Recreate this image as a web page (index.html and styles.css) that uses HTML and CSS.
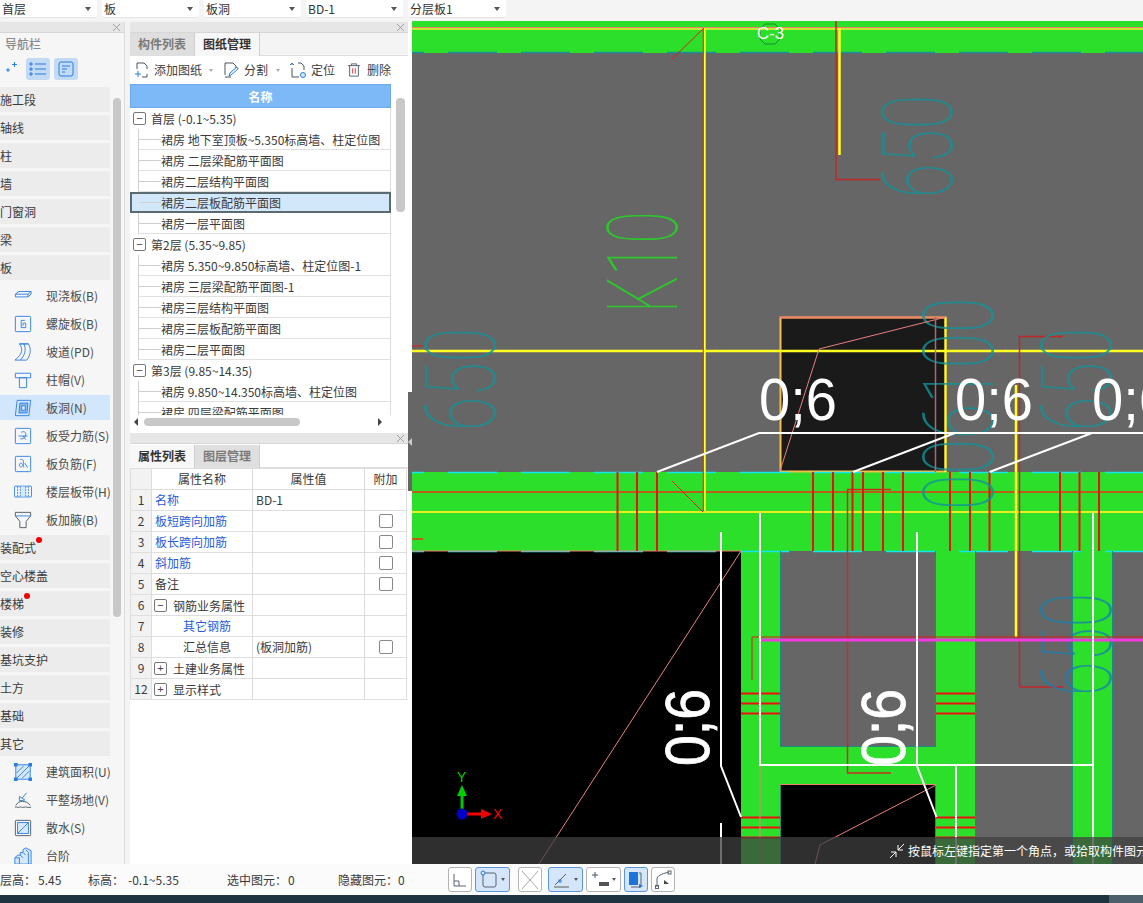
FILE: index.html
```html
<!DOCTYPE html>
<html lang="zh">
<head>
<meta charset="utf-8">
<title>板洞</title>
<link rel="stylesheet" href="styles.css">
</head>
<body>
<div class="topbar">
  <div class="combo c1"><span>首层</span><i class="caret"></i></div>
  <div class="combo c1"><span>板</span><i class="caret"></i></div>
  <div class="combo c1"><span>板洞</span><i class="caret"></i></div>
  <div class="combo c1"><span>BD-1</span><i class="caret"></i></div>
  <div class="combo c2"><span>分层板1</span><i class="caret"></i></div>
</div>
<div class="main">
  <aside class="nav">
    <div class="strip"><svg class="close" width="9" height="9" viewBox="0 0 9 9"><path d="M1 1 8 8M8 1 1 8"/></svg></div>
    <div class="nav-title">导航栏</div>
    <div class="nav-tools">
      <svg class="ico-plus" width="14" height="14" viewBox="0 0 14 14"><path d="M8 2.500h5M10.500 0v5M2 8h4M4 6v4" class="st-blue"/></svg>
      <span class="toggle"><svg width="18" height="16" viewBox="0 0 18 16"><path d="M6 3h11M6 8h11M6 13h11" class="st-blue"/><path d="M1 2h2v2H1zM1 7h2v2H1zM1 12h2v2H1z" class="st-blue"/></svg></span>
      <span class="toggle"><svg width="16" height="16" viewBox="0 0 16 16"><rect x="1" y="1" width="14" height="14" rx="2" class="st-blue"/><path d="M4 5h8M4 8h5M4 11h3" class="st-blue"/></svg></span>
    </div>
    <div class="nav-body">
      <div class="nav-list">
        <div class="cat">施工段</div>
        <div class="cat">轴线</div>
        <div class="cat">柱</div>
        <div class="cat">墙</div>
        <div class="cat">门窗洞</div>
        <div class="cat">梁</div>
        <div class="cat">板</div>
        <div class="sub"><svg viewBox="0 0 20 20"><path d="M1.500 8 5.500 5H19v3l-3.500 3H1.500z M1.500 8h14v3 M15.500 8 19 5" class="st-blue"/></svg>现浇板(B)</div>
        <div class="sub"><svg viewBox="0 0 20 20"><rect x="1.500" y="1.500" width="17" height="17" rx="1" class="st-blue"/><path d="M12 6H8v8h5V9h-3v3" class="st-blue"/></svg>螺旋板(B)</div>
        <div class="sub"><svg viewBox="0 0 20 20"><path d="M6 1c4 5 4 11-5 18h13c5-6 5-13 2-18zM6 1c5 0 7 0 10 0M11 1c3 6 1 13-4 18" class="st-blue"/></svg>坡道(PD)</div>
        <div class="sub"><svg viewBox="0 0 20 20"><path d="M1.500 2.500h17v5h-17zM6 7.500h8v11H6z" class="st-blue"/></svg>柱帽(V)</div>
        <div class="sub active"><svg viewBox="0 0 20 20"><path d="M3.500 1.500h15l-2 17h-15z" class="st-blue"/><path d="M6.500 4.500h9l-1 11h-9z" class="st-blue fill-blue"/><rect x="8.500" y="7.500" width="4" height="5" class="st-blue fill-light"/></svg>板洞(N)</div>
        <div class="sub"><svg viewBox="0 0 20 20"><rect x="1.500" y="1.500" width="17" height="17" rx="1" class="st-blue"/><path d="M5 10h10M8 6c3-2 6 0 5 3-1 3-3 5-6 4M10 10l3 4" class="st-blue"/></svg>板受力筋(S)</div>
        <div class="sub"><svg viewBox="0 0 20 20"><rect x="1.500" y="1.500" width="17" height="17" rx="1" class="st-blue"/><path d="M7 5c4-1 4 3 3 6s-4 3-4 0 4-3 5 3M12 9l3 5" class="st-blue"/></svg>板负筋(F)</div>
        <div class="sub"><svg viewBox="0 0 20 20"><rect x="0.500" y="3.500" width="19" height="12" rx="1" class="st-blue"/><rect x="7" y="4" width="6" height="11" class="fill-light"/><path d="M4 4v11M7 4v11M13 4v11M16 4v11" class="st-dash"/></svg>楼层板带(H)</div>
        <div class="sub"><svg viewBox="0 0 20 20"><path d="M1.500 1.500h17v4l-5 6v7h-7v-7l-5-6z" class="st-dark"/><path d="M1.500 5.500h17" class="st-blue"/></svg>板加腋(B)</div>
        <div class="cat">装配式<i class="dot"></i></div>
        <div class="cat">空心楼盖</div>
        <div class="cat">楼梯<i class="dot"></i></div>
        <div class="cat">装修</div>
        <div class="cat">基坑支护</div>
        <div class="cat">土方</div>
        <div class="cat">基础</div>
        <div class="cat">其它</div>
        <div class="sub"><svg viewBox="0 0 20 20"><rect x="2" y="2" width="16" height="16" class="fill-light st-blue"/><path d="M3 11 11 3M3 17 17 3M9 17l8-8" class="st-blue"/><path d="M0 0h4v4H0zM16 0h4v4h-4zM0 16h4v4H0zM16 16h4v4h-4z" class="handle"/></svg>建筑面积(U)</div>
        <div class="sub"><svg viewBox="0 0 20 20"><path d="M14 2 9 8M6 6l6 4-6 1z" class="st-blue"/><path d="M2 16c3-6 12-6 16 0" class="st-dark"/><path d="M1 18c2-1 3 1 5 0s3 1 5 0 4 1 8 0" class="st-dark"/></svg>平整场地(V)</div>
        <div class="sub"><svg viewBox="0 0 20 20"><rect x="1.500" y="1.500" width="17" height="17" rx="1" class="st-dark"/><rect x="4" y="4" width="12" height="12" class="fill-light st-blue"/><path d="M4 16 16 4" class="st-blue"/></svg>散水(S)</div>
        <div class="sub"><svg viewBox="0 0 20 20"><path d="M1 12l3-3h3V6h3V3l3-2 6 3v15H1z" class="st-blue fill-light"/><path d="M1 12h5v7M7 9l3 3M10 6l3 3M13 3l3 3v13" class="st-blue"/></svg>台阶</div>
      </div>
      <div class="nav-scroll"></div>
    </div>
  </aside>

  <section class="mid">
    <div class="drawings">
      <div class="strip"><svg class="close" width="9" height="9" viewBox="0 0 9 9"><path d="M1 1 8 8M8 1 1 8"/></svg></div>
      <div class="tabs">
        <div class="tab off">构件列表</div>
        <div class="tab on">图纸管理</div>
      </div>
      <div class="tools">
        <svg class="t-ico" viewBox="0 0 16 16"><path d="M3 7V1h7l3 3v3M13 12v3H8" class="st-dark"/><path d="M1 12h6M4 9v6" class="st-blue"/></svg>
        <span>添加图纸</span><i class="mini-caret mc1"></i>
        <svg class="t-ico ic2" viewBox="0 0 16 16"><path d="M2 13V1h8l3 3v2M2 15h6" class="st-dark"/><path d="M6 14l1-3 7-6 1 2-7 6z" class="st-blue"/></svg>
        <span>分割</span><i class="mini-caret mc2"></i>
        <svg class="t-ico ic3" viewBox="0 0 16 16"><path d="M2 6v9h7M8 1h3l3 3v4M2 1v2" class="st-dark"/><path d="M4 3 2 1 0 3" class="st-blue"/><circle cx="13" cy="13" r="2.500" class="st-blue fill-light"/></svg>
        <span>定位</span>
        <svg class="t-ico ic4" viewBox="0 0 16 16"><path d="M1 3h14M5 3V1h6v2M3 3v12h10V3" class="st-dark"/><path d="M6.500 6v6M9.500 6v6" class="st-red"/></svg>
        <span>删除</span>
      </div>
      <div class="tree-area">
        <div class="tree-col">
          <div class="tree-head">名称</div>
          <div class="tree-clip">
            <div class="group"><i class="box">−</i>首层 (-0.1~5.35)</div>
            <div class="item"><i class="twig"></i>裙房 地下室顶板~5.350标高墙、柱定位图</div>
            <div class="item"><i class="twig"></i>裙房 二层梁配筋平面图</div>
            <div class="item"><i class="twig"></i>裙房二层结构平面图</div>
            <div class="item selected"><i class="twig"></i>裙房二层板配筋平面图</div>
            <div class="item"><i class="twig"></i>裙房一层平面图</div>
            <div class="group"><i class="box">−</i>第2层 (5.35~9.85)</div>
            <div class="item"><i class="twig"></i>裙房 5.350~9.850标高墙、柱定位图-1</div>
            <div class="item"><i class="twig"></i>裙房 三层梁配筋平面图-1</div>
            <div class="item"><i class="twig"></i>裙房三层结构平面图</div>
            <div class="item"><i class="twig"></i>裙房三层板配筋平面图</div>
            <div class="item"><i class="twig"></i>裙房二层平面图</div>
            <div class="group"><i class="box">−</i>第3层 (9.85~14.35)</div>
            <div class="item"><i class="twig"></i>裙房 9.850~14.350标高墙、柱定位图</div>
            <div class="item"><i class="twig"></i>裙房 四层梁配筋平面图</div>
          </div>
        </div>
        <div class="tree-vbar"><div class="vthumb"></div></div>
      </div>
      <div class="hbar"><i class="arr-l"></i><div class="hthumb"></div><i class="arr-r"></i></div>
    </div>
    <div class="props">
      <div class="strip"><svg class="close" width="9" height="9" viewBox="0 0 9 9"><path d="M1 1 8 8M8 1 1 8"/></svg></div>
      <div class="tabs">
        <div class="tab on">属性列表</div>
        <div class="tab off">图层管理</div>
      </div>
      <table class="ptable">
        <tr><th class="n"></th><th class="pn">属性名称</th><th class="pv">属性值</th><th class="pa">附加</th></tr>
        <tr><td class="n">1</td><td class="link">名称</td><td>BD-1</td><td></td></tr>
        <tr><td class="n">2</td><td class="link">板短跨向加筋</td><td></td><td class="ck"><i class="check"></i></td></tr>
        <tr><td class="n">3</td><td class="link">板长跨向加筋</td><td></td><td class="ck"><i class="check"></i></td></tr>
        <tr><td class="n">4</td><td class="link">斜加筋</td><td></td><td class="ck"><i class="check"></i></td></tr>
        <tr><td class="n">5</td><td>备注</td><td></td><td class="ck"><i class="check"></i></td></tr>
        <tr><td class="n">6</td><td class="node"><div class="node-in"><i class="box pbox">−</i>钢筋业务属性</div></td><td></td><td></td></tr>
        <tr><td class="n">7</td><td class="link indent">其它钢筋</td><td></td><td></td></tr>
        <tr><td class="n">8</td><td class="indent">汇总信息</td><td>(板洞加筋)</td><td class="ck"><i class="check"></i></td></tr>
        <tr><td class="n">9</td><td class="node"><div class="node-in"><i class="box pbox">+</i>土建业务属性</div></td><td></td><td></td></tr>
        <tr><td class="n">12</td><td class="node"><div class="node-in"><i class="box pbox">+</i>显示样式</div></td><td></td><td></td></tr>
      </table>
    </div>
  </section>

  <div class="splitter"><div class="handle-bar"><i class="arr-l light"></i></div></div>

  <div class="canvas">
    <svg class="cad-svg" viewBox="412 21 731 843" width="731" height="843">
      <rect x="412" y="21" width="731" height="843" fill="#666666"/>
      <rect x="412" y="21" width="731" height="32" fill="#2bdf2b"/>
      <rect x="412" y="472" width="731" height="79" fill="#2bdf2b"/>
      <rect x="412" y="551" width="329" height="313" fill="#000"/>
      <rect x="741" y="551" width="39" height="313" fill="#2bdf2b"/>
      <rect x="936" y="551" width="39" height="313" fill="#2bdf2b"/>
      <rect x="1073" y="551" width="39" height="313" fill="#2bdf2b"/>
      <rect x="780" y="746" width="156" height="38" fill="#2bdf2b"/>
      <rect x="780" y="785" width="156" height="79" fill="#000"/>
      <rect x="780.500" y="317.500" width="165" height="154" fill="#1a1a1a" stroke="#f5c04a" stroke-width="2"/>
      <path d="M780 317.500H946" stroke="#f0806a" stroke-width="2"/>
      <path d="M945.500 317V472" stroke="#ffff20" stroke-width="2"/>

      <path d="M412 52.500H1143" class="dash-teal"/>
      <path d="M412 472.500H1143M412 551.500H1143" class="dash-cyan"/>
      <path d="M412 551H741M780 784.500H936" class="ln-salmon"/>
      <path d="M780.500 551V746M935.500 551V746M780.500 785V864M935.500 785V864M975.500 551V864M1072.500 551V864M1112.500 551V864M780 746.500H936" class="ln-teal"/>

      <path d="M412 27.500H1143" class="ln-salmon"/>
      <path d="M412 29H1143" class="ln-yellow-thin"/>
      <path d="M412 492H1143" class="ln-brown"/>
      <path d="M412 512H1143" class="ln-yellow-thin2"/>
      <path d="M412 351H1143" class="ln-yellow"/>
      <path d="M704.500 28V511M839.500 28V155M1016 385V637" class="ln-yellow"/>
      <path d="M703.300 28V511" class="ln-red"/>
      <path d="M672 59 704 28M672 481 703 512" class="ln-red"/>
      <path d="M836 21V179.500H880" class="ln-dred2"/>
      <path d="M1019.500 687H1063M1063 336.500H1019.500V687" class="ln-dred2"/>
      <path d="M891 489.500H847.500V773H891" class="ln-dred"/>
      <path d="M412 346H423" class="ln-red"/>
      <path d="M412 539H423" class="ln-brown"/>

      <path d="M617.500 472v79M637 472v79M657 472v79M813 472v79M833 472v79M852.500 472v79M863 472v79M883 472v79M903 472v79M950 472v79M970 472v79M989.500 472v79M1060 472v79M1079.500 472v79M1099 472v79" class="ln-rebar"/>
      <path d="M741 693.500h39M741 703.500h39M741 713.500h39M936 693.500h39M936 703.500h39M936 713.500h39M741 817.500h39M741 827.500h39M741 837.500h39M936 817.500h39M936 827.500h39M936 837.500h39" class="ln-rebar"/>

      <text class="cad teal" transform="translate(952,198) rotate(-90) scale(0.64,1)">650</text>
      <text class="cad teal" transform="translate(495,431) rotate(-90) scale(0.64,1)">650</text>
      <text class="cad teal" transform="translate(1111,431) rotate(-90) scale(0.64,1)">650</text>
      <text class="cad tealb" transform="translate(1111,696) rotate(-90) scale(0.64,1)">650</text>
      <text class="cad teal" transform="translate(993,510) rotate(-90) scale(0.66,1)">006100</text>
      <text class="cad lime" transform="translate(677,313) rotate(-90) scale(0.6,1)">K10</text>

      <path d="M760 640H1143" class="ln-magenta"/>
      <path d="M1143 637H752V680" class="ln-red"/>

      <path d="M946 317 819 349 780 471" class="ln-pink"/>
      <path d="M935.500 317V472" class="ln-brownpink"/>
      <path d="M741 551 539 864" class="ln-pink"/>
      <path d="M936 785 820 845 815 864" class="ln-pink"/>
      <path d="M760 765V864" class="ln-pink"/>

      <path d="M657 472 759 433H1143M853 472 955 433M989.500 472 1092 433" class="ln-white"/>
      <path d="M760 513V765H1093V513M1093 765V864M956 765V864" class="ln-white"/>
      <path d="M721 532V766L741 817M721 823V864M917 532V766L936.500 817" class="ln-white"/>

      <text class="big" x="759" y="420" textLength="78" lengthAdjust="spacingAndGlyphs">0;6</text>
      <text class="big" x="955" y="420" textLength="78" lengthAdjust="spacingAndGlyphs">0;6</text>
      <text class="big" x="1092" y="420" textLength="78" lengthAdjust="spacingAndGlyphs">0;6</text>
      <text class="big heavy" transform="translate(709,766) rotate(-90)" textLength="77" lengthAdjust="spacingAndGlyphs">0;6</text>
      <text class="big heavy" transform="translate(905,766) rotate(-90)" textLength="77" lengthAdjust="spacingAndGlyphs">0;6</text>

      <path d="M765 24h10l5 5v10l-5 5h-10l-5-5V29z" class="ln-dgreen"/>
      <text class="c3" x="757" y="39" textLength="27" lengthAdjust="spacingAndGlyphs">C-3</text>

      <path d="M462 812V796" class="ax-g"/><path d="M462 785l5 11h-10z" class="ax-gf"/>
      <text class="ax-y" x="457" y="782">Y</text>
      <path d="M466 814H481" class="ax-r"/><path d="M492 814l-11-5v10z" class="ax-rf"/>
      <text class="ax-x" x="493" y="819">X</text>
      <circle cx="462" cy="814" r="5.500" fill="#0000c8"/>
    </svg>
    <div class="prompt">
      <svg width="18" height="18" viewBox="0 0 18 18"><path d="M10 8 16 2M10 3v5h5M8 10l-6 6M3 10h5v5" class="st-white"/></svg>
      <span>按鼠标左键指定第一个角点，或拾取构件图元</span>
    </div>
  </div>
</div>

<div class="status">
  <span class="s-a">层高：</span><span class="s-b">5.45</span>
  <span class="s-c">标高：</span><span class="s-d">-0.1~5.35</span>
  <span class="s-e">选中图元：</span><span class="s-f">0</span>
  <span class="s-g">隐藏图元：</span><span class="s-h">0</span>
  <div class="btns">
    <div class="btn sq"><svg width="16" height="20" viewBox="0 0 16 20"><path d="M2 4v12h12M2 11h5v5" class="st-grey"/></svg></div>
    <div class="btn wide on"><svg width="18" height="20" viewBox="0 0 18 20"><rect x="3" y="3" width="13" height="14" rx="2" class="st-grey"/><circle cx="3" cy="3" r="2" class="st-blue fill-light"/></svg><i class="mini-caret dark"></i></div>
    <div class="btn sq gap"><svg width="18" height="20" viewBox="0 0 18 20"><path d="M1 1 17 19M17 1 1 19" class="st-lgrey"/></svg></div>
    <div class="btn wide on"><svg width="18" height="20" viewBox="0 0 18 20"><path d="M2 15 13 4" class="st-grey"/><path d="M1 17h15" class="thick-grey"/><rect x="6" y="10" width="2" height="2" class="st-blue"/></svg><i class="mini-caret dark"></i></div>
    <div class="btn wide"><svg width="18" height="20" viewBox="0 0 18 20"><path d="M1 5h6M4 2v6" class="st-dark"/><rect x="8" y="12" width="10" height="4" fill="#555"/></svg><i class="mini-caret dark"></i></div>
    <div class="btn sq on"><svg width="16" height="20" viewBox="0 0 16 20"><rect x="1" y="2" width="9" height="13" fill="#1e73d8"/><path d="M11 3h2v12M3 17h10" class="st-grey"/><path d="M11 14l4 2-4 2z" fill="#1e73d8"/></svg></div>
    <div class="btn sq"><svg width="18" height="20" viewBox="0 0 18 20"><path d="M3 17V9c0-3 4-5 12-7" class="st-grey"/><path d="M10 10l5 4h-5z" fill="#444"/><rect x="1.500" y="15.500" width="3" height="3" class="st-grey"/><rect x="14" y="1" width="3" height="3" class="st-grey"/></svg></div>
  </div>
</div>
<div class="footer"><div class="foot-right"></div></div>
</body>
</html>
```
FILE: styles.css
```css
* { box-sizing: border-box; }
html, body { margin: 0; padding: 0; }
body {
  width: 1143px; height: 903px; overflow: hidden;
  display: flex; flex-direction: column;
  background: #f3f3f3; color: #333;
  font: 12px/1 "Noto Sans CJK SC", "Noto Sans", sans-serif;
}
i { display: block; font-style: normal; }

/* top */
.topbar { height: 21px; flex: none; display: flex; gap: 5px; background: #f4f4f4; }
.combo {
  height: 18px; background: #fff; border-radius: 0 0 3px 3px;
  display: flex; align-items: center; justify-content: space-between;
  padding: 0 6px 0 2px; font-size: 12px; color: #333;
  border-bottom: 1px solid #e4e4e4;
}
.c1 { width: 97px; }
.c2 { width: 98px; padding-left: 2px; }
.caret { width: 0; height: 0; border: 3px solid transparent; border-top: 4px solid #555; border-bottom: 0; }

.main { height: 843px; flex: none; display: flex; }

/* shared */
.strip { height: 11px; background: #e6e6e6; border-bottom: 1px solid #d6d6d6; display: flex; justify-content: flex-end; align-items: center; padding-right: 3px; flex: none; }
.close { fill: none; stroke: #a0a0a0; stroke-width: 1; }
.st-blue { fill: none; stroke: #2a7de1; stroke-width: 1; }
.st-blue.fill-blue { fill: #8dbcf0; }
.st-blue.fill-light { fill: #d6e8fb; }
.fill-light { fill: #d6e8fb; }
.st-dark { fill: none; stroke: #4a5260; stroke-width: 1; }
.st-red { fill: none; stroke: #e02020; stroke-width: 1; }
.st-dash { fill: none; stroke: #2a7de1; stroke-width: 1; stroke-dasharray: 2 1; }
.st-white { fill: none; stroke: #fff; stroke-width: 1; }
.st-grey { fill: none; stroke: #5a6270; stroke-width: 1; }
.st-lgrey { fill: none; stroke: #a8a8a8; stroke-width: 1; }
.thick-grey { fill: none; stroke: #9aa0a8; stroke-width: 2; }
.handle { fill: #2a7de1; }

/* nav */
.nav { width: 125px; flex: none; background: #f6f6f6; border-right: 1px solid #dcdcdc; display: flex; flex-direction: column; overflow: hidden; margin-top: 1px; }
.nav-title { height: 22px; padding: 4px 0 0 5px; color: #8a8a8a; font-size: 12px; font-weight: 500; flex: none; line-height: 14px; }
.nav-tools { height: 32px; flex: none; display: flex; align-items: center; padding: 0 0 4px 4px; gap: 4px; }
.ico-plus { margin-right: 4px; }
.toggle { width: 24px; height: 22px; background: #c2daf4; border-radius: 3px; display: flex; align-items: center; justify-content: center; }
.nav-body { flex: 1; display: flex; min-height: 0; }
.nav-list { width: 110px; flex: none; display: flex; flex-direction: column; gap: 3px; }
.cat { height: 25px; flex: none; background: #ececec; padding-left: 0; line-height: 25px; color: #3a3a3a; display: flex; }
.sub { height: 25px; flex: none; display: flex; align-items: center; padding-left: 14px; color: #4a4a4a; white-space: nowrap; }
.sub svg { width: 18px; height: 18px; margin-right: 14px; flex: none; }
.sub.active { background: #d3e7fc; }
.dot { width: 6px; height: 6px; border-radius: 50%; background: #f00000; margin-top: 2px; margin-left: 0; }
.nav-scroll { width: 8px; height: 519px; margin: 11px 0 0 3px; background: #c8c8c8; border-radius: 4px; flex: none; }

/* middle */
.mid { width: 278px; flex: none; margin-left: 5px; display: flex; flex-direction: column; margin-top: 1px; }
.drawings { height: 411px; flex: none; background: #fff; display: flex; flex-direction: column; padding-bottom: 4px; }
.tabs { height: 23px; flex: none; display: flex; background: #f4f4f4; border-bottom: 1px solid #ddd; }
.tab { width: 65px; height: 23px; line-height: 22px; text-align: center; font-weight: 700; font-size: 12px; border-right: 1px solid #cfcfcf; }
.tab.off { background: #dfdfdf; color: #7a7a7a; }
.tab.on { background: #f7f7f7; color: #333; }
.tools { height: 28px; flex: none; display: flex; align-items: center; padding-left: 4px; color: #3d3d3d; background: #fff; }
.t-ico { width: 16px; height: 16px; margin-right: 4px; flex: none; }
.mini-caret { width: 0; height: 0; border: 2.5px solid transparent; border-top: 3px solid #aaa; border-bottom: 0; flex: none; }
.mini-caret.dark { border-top-color: #555; }
.mc1 { margin: 0 10px 0 7px; }
.mc2 { margin: 0 10px 0 8px; }
.ic2 { margin-right: 5px; }
.ic3 { margin-right: 5px; }
.ic4 { margin: 0 6px 0 12px; width: 14px; }
.tree-area { flex: 1; display: flex; min-height: 0; }
.tree-col { width: 261px; flex: none; display: flex; flex-direction: column; min-height: 0; }
.tree-head { height: 24px; flex: none; background: #7db8f7; color: #fff; font-weight: 700; text-align: center; line-height: 24px; border: 1px solid #6ea8e8; }
.tree-clip { flex: 1; overflow: hidden; min-height: 0; }
.group { height: 21px; display: flex; align-items: center; color: #3a3a3a; white-space: nowrap; padding-left: 3px; border-right: 1px solid #ddd; }
.box { width: 13px; height: 13px; border: 1px solid #777; border-radius: 2px; margin-right: 5px; font-size: 11px; line-height: 10px; text-align: center; color: #444; flex: none; font-family: "Liberation Sans", sans-serif; background: #fff; }
.item { height: 21px; margin-left: 8px; padding-top: 1px; border-left: 1px solid #d0d0d0; border-right: 1px solid #ddd; border-bottom: 1px solid #e0e0e0; display: flex; align-items: center; color: #3a3a3a; white-space: nowrap; overflow: hidden; }
.twig { width: 22px; height: 1px; background: #d0d0d0; flex: none; }
.item.selected { margin-left: 0; padding: 0 0 0 8px; height: 21px; background: #d3e7fb; border: 2px solid #5a6a70; }
.item.selected .twig { width: 21px; }
.tree-vbar { width: 17px; flex: none; }
.vthumb { width: 9px; height: 114px; margin: 14px 0 0 5px; background: #c8c8c8; border-radius: 4px; }
.hbar { height: 14px; flex: none; display: flex; align-items: center; padding-left: 4px; background: #fff; }
.hthumb { width: 156px; height: 8px; background: #c8c8c8; border-radius: 4px; margin: 0 78px 0 6px; }
.arr-l { width: 0; height: 0; border: 4px solid transparent; border-right: 4px solid #444; border-left: 0; }
.arr-r { width: 0; height: 0; border: 4px solid transparent; border-left: 4px solid #444; border-right: 0; }
.arr-l.light { border-right-color: #ccc; }

.props { flex: 1; background: #fff; display: flex; flex-direction: column; }
.props .tabs { margin-top: 1px; background: #fff; }
.props .tab.on { background: #f7f7f7; }
.ptable { border-collapse: collapse; table-layout: fixed; width: 276px; flex: none; color: #3a3a3a; }
.ptable th, .ptable td { height: 21px; border: 1px solid #dedede; padding: 0 0 0 3px; font-weight: 400; font-size: 12px; white-space: nowrap; overflow: hidden; vertical-align: middle; }
.ptable th { text-align: center; padding: 0; }
.ptable .n { width: 21px; background: #f2f2f2; text-align: center; padding: 0; }
.pn { width: 101px; }
.pv { width: 112px; }
.pa { width: 42px; }
.ptable .link { color: #2a5bd7; }
.ptable .indent { padding-left: 31px; }
.ptable .ck { padding: 0; }
.ptable .node { padding-left: 2px; }
.node-in { display: flex; align-items: center; padding-top: 1px; }
.check { width: 14px; height: 14px; margin-left: 14px; border: 1px solid #888; border-radius: 2px; background: #fff; }
.pbox { margin-right: 6px; }

/* splitter */
.splitter { width: 4px; flex: none; background: #fff; }
.handle-bar { width: 4px; height: 99px; margin-top: 371px; background: #666; display: flex; align-items: center; }

/* canvas */
.canvas { width: 731px; flex: none; position: relative; overflow: hidden; background: #666; }
.cad-svg { display: block; }
.prompt { position: absolute; left: 0; right: 0; bottom: 0; height: 27px; background: rgba(63,63,63,.74); color: #fff; display: flex; align-items: center; padding-left: 476px; white-space: nowrap; font-size: 12px; gap: 2px; overflow: hidden; }
.prompt svg { flex: none; }

.dash-teal { stroke: #1a8f9a; stroke-width: 1.5; stroke-dasharray: 49 24; stroke-dashoffset: 37; fill: none; }
.dash-cyan { stroke: #10e8f0; stroke-width: 1.5; stroke-dasharray: 49 24; stroke-dashoffset: 37; fill: none; }
.ln-teal { stroke: #1f8a80; stroke-width: 1; fill: none; }
.ln-salmon { stroke: #f0806a; stroke-width: 1; fill: none; }
.ln-yellow-thin { stroke: #f2f030; stroke-width: 1.500; fill: none; }
.ln-yellow-thin2 { stroke: #e6ee20; stroke-width: 2; fill: none; }
.ln-yellow { stroke: #ffff20; stroke-width: 2.500; fill: none; }
.ln-brown { stroke: #b8601a; stroke-width: 2; fill: none; }
.ln-red { stroke: #e81818; stroke-width: 1; fill: none; }
.ln-dred { stroke: #c83020; stroke-width: 1.500; fill: none; }
.ln-dred2 { stroke: #c02828; stroke-width: 1.500; fill: none; }
.ln-rebar { stroke: #ee1010; stroke-width: 2; fill: none; }
.ln-magenta { stroke: #f438e0; stroke-width: 3; fill: none; }
.ln-pink { stroke: #e88080; stroke-width: 1; fill: none; }
.ln-brownpink { stroke: #a86a70; stroke-width: 1.500; fill: none; }
.ln-white { stroke: #fff; stroke-width: 2; fill: none; }
.ln-dgreen { stroke: #1a8a30; stroke-width: 1; fill: none; }
.cad { font-family: Roboto, "Noto Sans", sans-serif; font-weight: 100; font-size: 98px; fill-opacity: .8; }
.teal { fill: #11929a; }
.tealb { fill: #1a80b0; }
.lime { fill: #1fe01f; }
.big { font-family: "Liberation Sans", sans-serif; font-size: 60px; fill: #fff; }
.big.heavy { font-size: 63px; stroke: #fff; stroke-width: .8; }
.c3 { font-family: "Liberation Sans", sans-serif; font-size: 17px; fill: #fff; }
.ax-g { stroke: #00c800; stroke-width: 3; fill: none; }
.ax-gf { fill: #00d000; }
.ax-r { stroke: #f00000; stroke-width: 3; fill: none; }
.ax-rf { fill: #f00000; }
.ax-y { font-family: "Liberation Sans", sans-serif; font-size: 14px; fill: #00d000; }
.ax-x { font-family: "Liberation Sans", sans-serif; font-size: 14px; fill: #f00000; }

/* status */
.status { height: 31px; flex: none; background: #fbfbfb; display: flex; align-items: center; color: #3a3a3a; white-space: nowrap; }
.s-a { width: 38px; flex: none; }
.s-b { width: 50px; flex: none; }
.s-c { width: 40px; flex: none; }
.s-d { width: 99px; flex: none; }
.s-e { width: 61px; flex: none; }
.s-f { width: 50px; flex: none; }
.s-g { width: 60px; flex: none; }
.s-h { width: 50px; flex: none; }
.btns { display: flex; gap: 3px; align-items: center; }
.btn { height: 25px; border: 1px solid #b4b4b4; border-radius: 3px; background: #fff; display: flex; align-items: center; justify-content: center; gap: 3px; flex: none; }
.btn.sq { width: 24px; }
.btn.wide { width: 35px; }
.btn.on { background: #d6e6fa; border-color: #5a96e0; }
.btn.gap { margin: 0 3px 0 5px; }
.footer { flex: 1; background: #1e3440; display: flex; justify-content: flex-end; }
.foot-right { width: 34px; background: #4c5f6a; }
```
